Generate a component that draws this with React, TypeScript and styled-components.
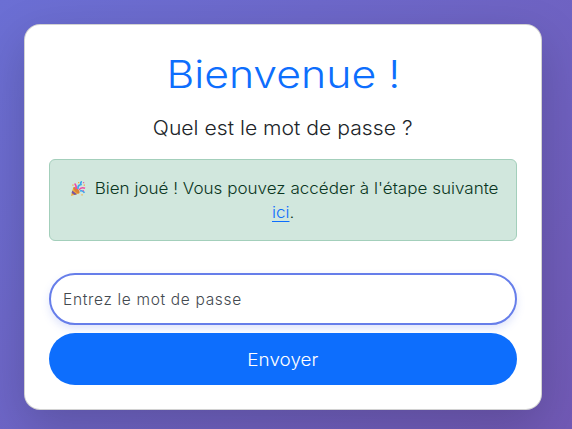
import React from "react";
import styled, { createGlobalStyle } from "styled-components";

const GlobalStyle = createGlobalStyle`
  *, *::before, *::after { box-sizing: border-box; }
  body {
    margin: 0;
    overflow: hidden;
    font-family: Inter, "Open Sans", sans-serif;
    font-weight: 300;
    color: #212529;
  }
`;

const Page = styled.main`
  height: 100vh;
  padding: 24px 30px 19px 24px;
  background: linear-gradient(135deg, #6b6fd4 0%, #7159b5 100%);
`;

const Card = styled.section`
  height: 386px;
  padding: 24px;
  display: flex;
  flex-direction: column;
  background: #fff;
  border: 1px solid rgba(0, 0, 0, 0.175);
  border-radius: 16px;
  box-shadow: 0 16px 48px rgba(0, 0, 0, 0.175);
  text-align: center;
`;

const Wide = styled.span<{ $stretch: number }>`
  display: inline-block;
  white-space: nowrap;
  transform: scaleX(${(p) => p.$stretch});
`;

const Title = styled.h1`
  margin: 0 0 16px;
  height: 48px;
  font-size: 38.5px;
  line-height: 51px;
  font-weight: 300;
  color: #0d6efd;
`;

const Lead = styled.p`
  margin: 0 0 16px;
  height: 30px;
  font-size: 19.5px;
  line-height: 30px;
`;

const Alert = styled.div`
  height: 82px;
  margin-bottom: 32px;
  padding: 17px 16px 15px;
  background: #d1e7dd;
  border: 1px solid #a3cfbb;
  border-radius: 6px;
  color: #0a3622;
  font-size: 15.5px;
  line-height: 24px;
`;

const AlertLine = styled.div`
  display: flex;
  justify-content: center;
  align-items: center;
  height: 24px;
`;

const Party = styled.svg`
  width: 16px;
  height: 16px;
  margin: 0 26.5px 0 -15.5px;
  flex: none;
`;

const Link = styled.a`
  color: #0d6efd;
  text-decoration: underline;
  text-decoration-thickness: 1px;
  text-underline-offset: 3px;
`;

const Field = styled.input`
  height: 52px;
  flex: none;
  margin-bottom: 8px;
  padding: 0 12px;
  border: 2px solid #667eea;
  border-radius: 26px;
  background: #fff;
  box-shadow: 0 4px 8px rgba(102, 126, 234, 0.2);
  outline: none;
  font: 300 15.5px Inter, sans-serif;
  letter-spacing: 0.67px;
  &::placeholder { color: #43494f; opacity: 1; }
`;

const Submit = styled.button`
  height: 52px;
  flex: none;
  padding: 0;
  border: 0;
  border-radius: 26px;
  background: #0d6efd;
  color: #fff;
  font: 300 17.5px Inter, sans-serif;
`;

const PartyPopper = () => (
  <Party viewBox="0 0 16 16" aria-hidden="true">
    <path d="M1 15 3.2 6.4Q8 7 9.5 12.3Z" fill="#f3ad35" />
    <path d="M2.3 9.5 7 13.3 4.6 14 1.6 12ZM3.2 6.4 9 11.5 8 9Z" fill="#7b569b" />
    <ellipse cx="6.5" cy="9.2" rx="1.7" ry="4" transform="rotate(-44 6.5 9.2)" fill="#d9813a" />
    <path d="M6 8Q7 5 4.6 2.4M9 9Q11 5.5 15 7.3" fill="none" stroke="#f04aa5" strokeWidth="1.5" />
    <path d="M8 8Q7.5 4 11 3.5 10 1 12 .7M10 10Q12.5 9 14.5 11.8" fill="none" stroke="#3ca5ec" strokeWidth="1.6" />
    <path d="M2.3 3.4h1.3v1.3H2.3zM8 1h1.3v1.3H8zM13.6 3.4h1.4v1.4h-1.4zM11.4 13.2h1.3v1.3h-1.3z" fill="#f4ae42" />
    <path d="M13 1h1.2v1.2H13zM12.7 9h1.2v1.2h-1.2z" fill="#e85fae" />
  </Party>
);

export default function App() {
  return (
    <>
      <GlobalStyle />
      <Page>
        <Card>
          <Title><Wide $stretch={1.11}>Bienvenue !</Wide></Title>
          <Lead><Wide $stretch={1.085}>Quel est le mot de passe ?</Wide></Lead>
          <Alert>
            <AlertLine>
              <PartyPopper />
              <Wide $stretch={1.1}>Bien joué ! Vous pouvez accéder à l'étape suivante</Wide>
            </AlertLine>
            <AlertLine><Wide $stretch={1.1}><Link href="#">ici</Link>.</Wide></AlertLine>
          </Alert>
          <Field placeholder="Entrez le mot de passe" aria-label="Mot de passe" />
          <Submit type="button"><Wide $stretch={1.08}>Envoyer</Wide></Submit>
        </Card>
      </Page>
    </>
  );
}
